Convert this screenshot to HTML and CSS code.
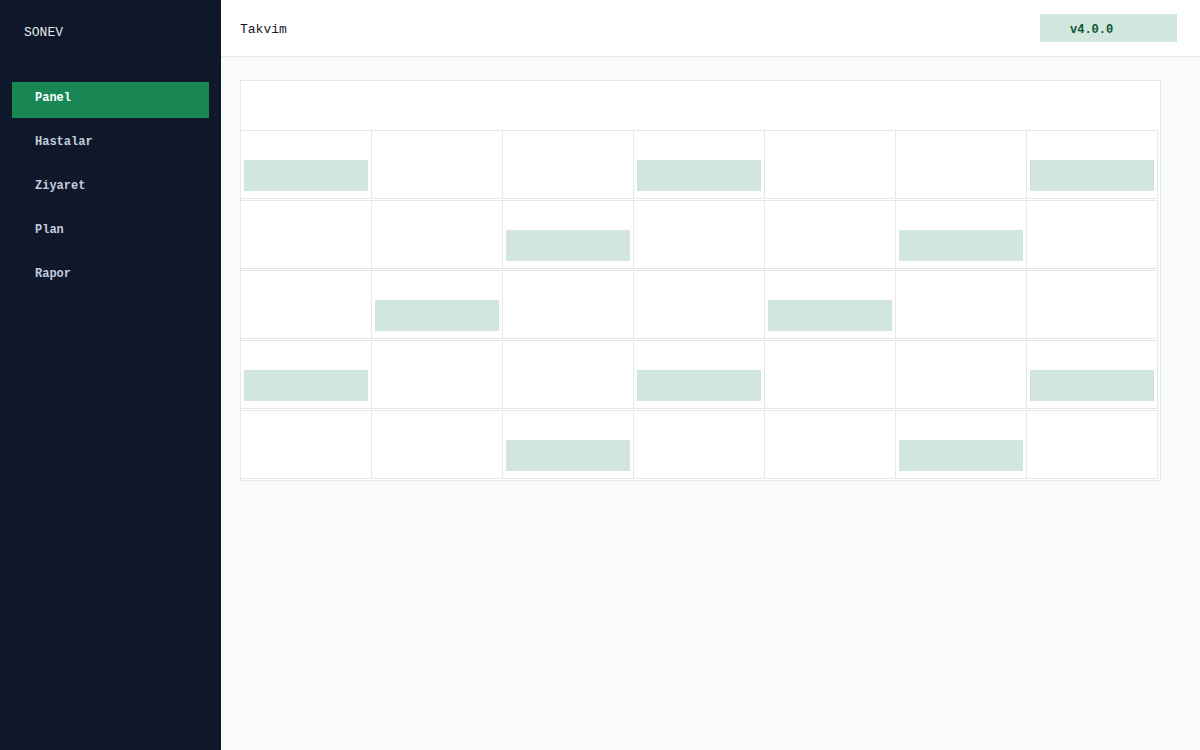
FILE: index.html
```html
<!DOCTYPE html>
<html lang="tr">
<head>
<meta charset="utf-8">
<title>SONEV - Takvim</title>
<link rel="stylesheet" href="styles.css">
</head>
<body>
<div class="app">
  <aside class="sidebar">
    <div class="brand">SONEV</div>
    <nav class="nav">
      <a class="nav-item active">Panel</a>
      <a class="nav-item">Hastalar</a>
      <a class="nav-item">Ziyaret</a>
      <a class="nav-item">Plan</a>
      <a class="nav-item">Rapor</a>
    </nav>
  </aside>
  <main class="main">
    <header class="topbar">
      <div class="title">Takvim</div>
      <div class="badge">v4.0.0</div>
    </header>
    <section class="content">
      <div class="calendar">
        <div class="cal-head"></div>
        <div class="week">
          <div class="day"><div class="event"></div></div>
          <div class="day"></div>
          <div class="day"></div>
          <div class="day"><div class="event"></div></div>
          <div class="day"></div>
          <div class="day"></div>
          <div class="day"><div class="event"></div></div>
        </div>
        <div class="week">
          <div class="day"></div>
          <div class="day"></div>
          <div class="day"><div class="event"></div></div>
          <div class="day"></div>
          <div class="day"></div>
          <div class="day"><div class="event"></div></div>
          <div class="day"></div>
        </div>
        <div class="week">
          <div class="day"></div>
          <div class="day"><div class="event"></div></div>
          <div class="day"></div>
          <div class="day"></div>
          <div class="day"><div class="event"></div></div>
          <div class="day"></div>
          <div class="day"></div>
        </div>
        <div class="week">
          <div class="day"><div class="event"></div></div>
          <div class="day"></div>
          <div class="day"></div>
          <div class="day"><div class="event"></div></div>
          <div class="day"></div>
          <div class="day"></div>
          <div class="day"><div class="event"></div></div>
        </div>
        <div class="week">
          <div class="day"></div>
          <div class="day"></div>
          <div class="day"><div class="event"></div></div>
          <div class="day"></div>
          <div class="day"></div>
          <div class="day"><div class="event"></div></div>
          <div class="day"></div>
        </div>
      </div>
    </section>
  </main>
</div>
</body>
</html>
```

FILE: styles.css
```css
* { box-sizing: border-box; }
html, body { margin: 0; padding: 0; }
body {
  font-family: "Liberation Mono", "DejaVu Sans Mono", monospace;
  background: #f8fafc;
  color: #111827;
}
.app {
  display: flex;
  width: 1200px;
  height: 750px;
  overflow: hidden;
}
.sidebar {
  width: 221px;
  flex: 0 0 221px;
  background: #0f172a;
  padding: 0 12px;
}
.brand {
  padding: 25px 12px 23px;
  font-size: 13px;
  line-height: 16px;
  color: #e5e7eb;
}
.nav {
  margin-top: 18px;
  display: flex;
  flex-direction: column;
  gap: 8px;
}
.nav-item {
  display: block;
  height: 36px;
  padding: 8px 23px 0;
  font-size: 12px;
  line-height: 16px;
  font-weight: bold;
  color: #c2cddc;
  text-decoration: none;
}
.nav-item.active {
  background: #198754;
  color: #ffffff;
}
.main {
  flex: 1;
  display: flex;
  flex-direction: column;
  background: #f8fafc;
}
.topbar {
  height: 57px;
  background: #ffffff;
  border-bottom: 1px solid #e5e7eb;
  display: flex;
  align-items: center;
  justify-content: space-between;
  padding: 0 23px 0 19px;
}
.title {
  font-size: 13px;
  color: #111827;
  padding-top: 2px;
}
.badge {
  width: 137px;
  height: 28px;
  background: #d1e7dd;
  color: #0f5132;
  font-size: 12px;
  font-weight: bold;
  line-height: 26px;
  padding: 3px 0 0 30px;
}
.content {
  padding: 23px 19px;
}
.calendar {
  width: 921px;
  background: #ffffff;
  border: 1px solid #e5e7eb;
}
.cal-head {
  height: 49px;
}
.week {
  display: grid;
  grid-template-columns: repeat(7, 131px);
  width: 917px;
  border-top: 1px solid #e5e7eb;
  border-bottom: 1px solid #e5e7eb;
  margin-bottom: 1px;
}
.day {
  height: 67px;
  border-right: 1px solid #e5e7eb;
  padding: 29px 3px 0;
}
.event {
  height: 31px;
  background: #d1e7dd;
}
```
